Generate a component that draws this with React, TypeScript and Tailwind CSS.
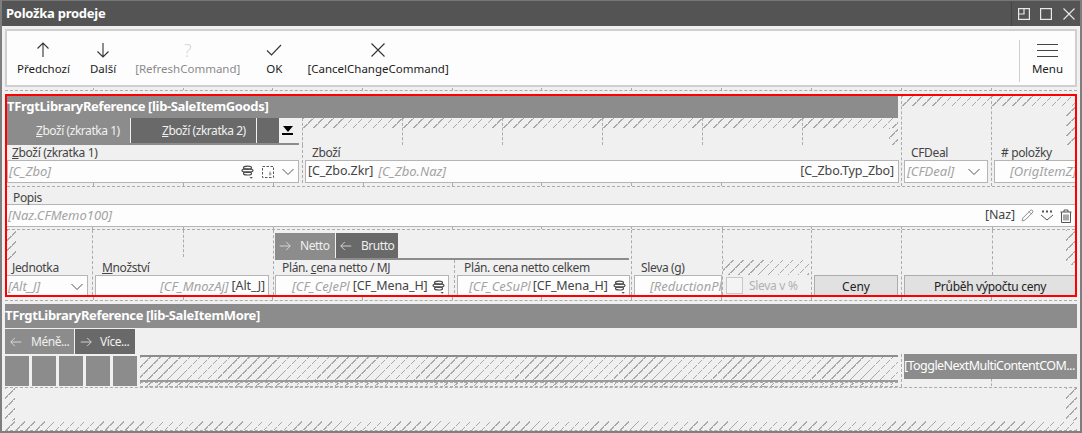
import React from 'react';
import { Pencil } from 'lucide-react';

const hatch =
  'bg-[repeating-linear-gradient(45deg,transparent_0,transparent_6px,#f0f0f0_6px,#f0f0f0_7px),repeating-linear-gradient(135deg,#a8a8a8_0,#a8a8a8_1px,transparent_1px,transparent_7px)]';
const dash = 'border-[#ababab] border-dashed';

// small stacked-disc glyph used by the lookup fields
function StackIcon() {
  return (
    <svg width="14" height="14" viewBox="0 0 14 14" fill="none" stroke="#4a4a4a" strokeWidth="1.2" className="shrink-0">
      <ellipse cx="6.5" cy="2.8" rx="4" ry="1.6" />
      <ellipse cx="6.5" cy="5.6" rx="5.5" ry="1.7" />
      <ellipse cx="6.5" cy="8.4" rx="4" ry="1.6" />
      <path d="M8.5 12h3.4l-1.7 1.8z" fill="#555" stroke="none" />
    </svg>
  );
}

function PickIcon() {
  return (
    <svg width="14" height="14" viewBox="0 0 14 14" fill="none" className="shrink-0">
      <rect x="1.5" y="1.5" width="11" height="11" stroke="#555" strokeDasharray="2.5 1.5" />
      <path d="M8 9h2.5M9 6.5v4" stroke="#888" />
    </svg>
  );
}

function Chevron() {
  return (
    <svg width="14" height="8" viewBox="0 0 14 8" fill="none" stroke="#555" strokeWidth="1" className="shrink-0">
      <path d="M1.5 1l5.5 5.5L12.5 1" />
    </svg>
  );
}

function Arrow({ dir, color = '#333', size = 16 }: { dir: 'up' | 'down' | 'left' | 'right'; color?: string; size?: number }) {
  const paths = {
    up: 'M8 15V1M2.5 6.5L8 1l5.5 5.5',
    down: 'M8 1v14M2.5 9.5L8 15l5.5-5.5',
    left: 'M15 8H1M6.5 2.5L1 8l5.5 5.5',
    right: 'M1 8h14M9.5 2.5L15 8l-5.5 5.5',
  };
  return (
    <svg width={size} height={size} viewBox="0 0 16 16" fill="none" stroke={color} strokeWidth="1.1" className="shrink-0">
      <path d={paths[dir]} />
    </svg>
  );
}

function ToolButton({ label, icon, className = '' }: { label: string; icon: React.ReactNode; className?: string }) {
  return (
    <div className={`flex flex-col items-center ${className}`}>
      <div className="flex h-[20px] items-center justify-center">{icon}</div>
      <div className="mt-[1px] whitespace-nowrap text-[11.5px] leading-[16px]">{label}</div>
    </div>
  );
}

// thin strip with a dashed bottom line and short ticks
function Ruler({ widths, className = '' }: { widths: number[]; className?: string }) {
  return (
    <div className={`flex shrink-0 border-b ${dash} ${className}`}>
      {widths.map((w, i) => (
        <div key={i} style={{ width: w }} className={`h-full shrink-0 ${i > 0 ? `border-l ${dash}` : ''}`} />
      ))}
    </div>
  );
}

function Input({ children, className = '' }: { children?: React.ReactNode; className?: string }) {
  return (
    <div className={`flex h-[23px] shrink-0 items-center overflow-hidden border border-[#b5b5b5] bg-[#fdfdfd] px-[1px] text-[12.5px] tracking-[-0.1px] text-[#444] ${className}`}>
      {children}
    </div>
  );
}

function Ph({ children }: { children: React.ReactNode }) {
  return <span className="text-[13px] tracking-normal whitespace-nowrap text-[#a3a3a3] italic">{children}</span>;
}

function Label({ children, className = '' }: { children: React.ReactNode; className?: string }) {
  return <div className={`h-[15px] text-[12px] leading-[15px] tracking-[-0.35px] whitespace-nowrap text-[#444] ${className}`}>{children}</div>;
}

function Tab({ children, dark, className = '' }: { children?: React.ReactNode; dark?: boolean; className?: string }) {
  return (
    <div className={`flex h-full shrink-0 items-center text-[12px] tracking-[-0.45px] whitespace-nowrap text-[#f0f0f0] ${dark ? 'bg-[#696969]' : 'bg-[#8c8c8c]'} ${className}`}>
      {children}
    </div>
  );
}

export default function App() {
  const grid = [88, 90, 89, 90, 90, 89, 90, 90, 90, 90, 90, 86];
  return (
    <div className="flex h-[433px] w-[1082px] flex-col overflow-hidden border-x-2 border-b-2 border-[#7e7e7e] bg-[#f0f0f0] font-['Noto_Sans',sans-serif]">
      {/* title bar */}
      <div className="flex h-[26px] shrink-0 items-center border-t border-[#777] bg-[#545454] pl-[4px] text-white">
        <div className="pt-px text-[13px] font-bold tracking-[-0.25px]">Položka prodeje</div>
        <div className="ml-auto flex h-[24px] items-center border-l border-[#454545] pr-[5px] pl-[6px]">
          <svg width="12" height="12" viewBox="0 0 12 12" fill="none" stroke="#e8e8e8" strokeWidth="1.2">
            <rect x="0.6" y="0.6" width="10.8" height="10.8" />
            <path d="M0.6 6h5.4V0.6" />
          </svg>
          <svg width="12" height="12" viewBox="0 0 12 12" fill="none" stroke="#e8e8e8" strokeWidth="1.2" className="ml-[10px]">
            <rect x="0.6" y="0.6" width="10.8" height="10.8" />
          </svg>
          <svg width="12" height="12" viewBox="0 0 12 12" fill="none" stroke="#e8e8e8" strokeWidth="1.1" className="ml-[11px]">
            <path d="M0.5 0.5l11 11M11.5 0.5l-11 11" />
          </svg>
        </div>
      </div>

      <div className="flex flex-1 flex-col px-[3px]">
        {/* toolbar */}
        <div className="mt-[3px] flex h-[58px] shrink-0 items-start border-2 border-[#cfcfcf] bg-[#fdfdfd] pt-[9px] text-[#222]">
          <ToolButton className="ml-[10px]" label="Předchozí" icon={<Arrow dir="up" />} />
          <ToolButton className="ml-[20px]" label="Další" icon={<Arrow dir="down" />} />
          <ToolButton
            className="ml-[19px] text-[#8a8a8a]"
            label="[RefreshCommand]"
            icon={<span className="text-[18px] leading-none font-light text-[#d8d8d8]">?</span>}
          />
          <ToolButton
            className="ml-[26px]"
            label="OK"
            icon={
              <svg width="16" height="12" viewBox="0 0 16 12" fill="none" stroke="#333" strokeWidth="1.1">
                <path d="M1 6.5l4.5 4.5L15 1" />
              </svg>
            }
          />
          <ToolButton
            className="ml-[25px]"
            label="[CancelChangeCommand]"
            icon={
              <svg width="14" height="14" viewBox="0 0 14 14" fill="none" stroke="#333" strokeWidth="1.1">
                <path d="M0.5 0.5l13 13M13.5 0.5l-13 13" />
              </svg>
            }
          />
          <div className="ml-auto flex h-[42px] w-[56px] flex-col items-center border-l border-[#cfcfcf]">
            <div className="flex h-[20px] flex-col justify-center gap-[5px]">
              <div className="h-px w-[21px] bg-[#444]" />
              <div className="h-px w-[21px] bg-[#444]" />
              <div className="h-px w-[21px] bg-[#444]" />
            </div>
            <div className="mt-[1px] text-[11.5px] leading-[16px]">Menu</div>
          </div>
        </div>

        <Ruler className="mt-[1px] h-[3px]" widths={grid} />

        {/* library reference frame */}
        <div className="mt-[3px] h-[203px] shrink-0 overflow-hidden border-2 border-[#ff0000]">
          <div className="flex h-[90px]">
            <div className="flex w-[891px] shrink-0 flex-col">
              <div className="flex h-[22px] shrink-0 items-center bg-[#8c8c8c] text-[13px] font-bold tracking-[-0.35px] text-white">
                TFrgtLibraryReference [lib-SaleItemGoods]
              </div>
              <div className="flex h-[27px] shrink-0">
                <div className="flex w-[295px] shrink-0 flex-col">
                  <div className="flex h-[25px] shrink-0">
                    <Tab className="w-[123px] pl-[29px]">
                      <span><span className="underline">Z</span>boží (zkratka 1)</span>
                    </Tab>
                    <Tab dark className="ml-px w-[125px] pl-[31px]">
                      <span><span className="underline">Z</span>boží (zkratka 2)</span>
                    </Tab>
                    <Tab dark className="ml-px w-[22px]" />
                    <div className="ml-[3px] flex w-[11px] flex-col items-center pt-[8px]">
                      <div className="h-0 w-0 border-x-[5.5px] border-t-[6px] border-x-transparent border-t-black" />
                      <div className="mt-[1px] h-[2px] w-[11px] bg-black" />
                    </div>
                  </div>
                  <div className="h-[2px] w-[292px] bg-[#8c8c8c]" />
                </div>
                {[100, 100, 100, 100, 100].map((w, i) => (
                  <div key={i} style={{ width: w }} className={`shrink-0 border-l ${dash}`}>
                    <div className={`h-[10px] ${hatch}`} />
                  </div>
                ))}
                <div className={`flex w-[96px] shrink-0 flex-col border-l ${dash}`}>
                  <div className={`h-[10px] ${hatch}`} />
                  <div className="flex flex-1 justify-end">
                    <div className={`w-[9px] ${hatch}`} />
                  </div>
                </div>
              </div>
              <div className="flex h-[38px] shrink-0">
                <div className="w-[295px] shrink-0 pr-[3px]">
                  <Label className="pl-[5px]"><span className="underline">Z</span>boží (zkratka 1)</Label>
                  <Input>
                    <Ph>[C_Zbo]</Ph>
                    <div className="ml-auto flex items-center gap-[6px] pr-[2px]">
                      <StackIcon />
                      <PickIcon />
                      <Chevron />
                    </div>
                  </Input>
                </div>
                <div className={`w-[596px] shrink-0 border-l ${dash} pl-[2px]`}>
                  <Label className="pl-[7px]">Zboží</Label>
                  <Input className="w-[594px] px-[2px]">
                    <span className="whitespace-nowrap">[C_Zbo.Zkr]</span>
                    <span className="ml-[5px]"><Ph>[C_Zbo.Naz]</Ph></span>
                    <span className="ml-auto pr-[2px] whitespace-nowrap">[C_Zbo.Typ_Zbo]</span>
                  </Input>
                </div>
              </div>
              <div className="flex h-[3px]">
                {[86, 90, 90, 90, 89, 89, 90, 90, 77].map((w, i) => (
                  <div key={i} style={{ width: w }} className={`shrink-0 ${i > 0 ? `border-l ${dash}` : ''}`} />
                ))}
              </div>
            </div>
            <div className={`ml-[3px] flex w-[90px] shrink-0 flex-col border-l ${dash} pl-[2px]`}>
              <div className={`-ml-[2px] h-[10px] ${hatch}`} />
              <div className="flex-1" />
              <Label className="pl-[7px]">CFDeal</Label>
              <Input className="w-[84px] px-[2px]">
                <Ph>[CFDeal]</Ph>
                <span className="ml-auto pr-[4px]"><Chevron /></span>
              </Input>
              <div className="h-[3px]" />
            </div>
            <div className={`flex w-[84px] shrink-0 flex-col border-l ${dash} pl-[2px]`}>
              <div className={`-ml-[2px] h-[10px] ${hatch}`} />
              <div className="flex flex-1 justify-end">
                <div className={`w-[9px] ${hatch}`} />
              </div>
              <Label className="pl-[7px]"># položky</Label>
              <Input className="w-[82px] border-r-0 pl-[15px]">
                <Ph>[OrigItemZ]</Ph>
              </Input>
              <div className="h-[3px]" />
            </div>
          </div>

          {/* description row */}
          <div className={`border-t ${dash}`}>
            <Label className="h-[17px] pt-[3px] pl-[6px]">Popis</Label>
            <Input className="border-x-0 pr-[3px]">
              <Ph>[Naz.CFMemo100]</Ph>
              <span className="ml-auto">[Naz]</span>
              <Pencil size={13} strokeWidth={1.2} className="ml-[6px] text-[#555]" />
              <svg width="14" height="12" viewBox="0 0 14 12" fill="none" stroke="#555" className="ml-[6px]">
                <path d="M1 5l6 5 6-5" />
                <path d="M2 1.5h2M6 1.5h2M10 1.5h2" strokeWidth="2" />
              </svg>
              <svg width="12" height="14" viewBox="0 0 12 14" fill="none" stroke="#555" className="ml-[6px]">
                <path d="M0.5 3h11M4 3V1h4v2M1.5 3v10.5h9V3" />
                <path d="M4 5.5v6M6 5.5v6M8 5.5v6" />
              </svg>
            </Input>
            <Ruler className="h-[3px]" widths={[85, 91, 90, 179, 89, 90, 91, 89, 90, 91, 83]} />
          </div>

          {/* bottom row */}
          <div className="flex h-[65px]">
            <div className="flex w-[85px] shrink-0 flex-col">
              <div className={`h-[30px] w-[9px] shrink-0 ${hatch}`} />
              <Label className="pl-[5px]"><span className="underline">J</span>ednotka</Label>
              <Input className="w-[81px] border-l-0">
                <Ph>[Alt_J]</Ph>
                <span className="ml-auto pr-[2px]"><Chevron /></span>
              </Input>
            </div>
            <div className={`flex w-[181px] shrink-0 flex-col border-l ${dash} pl-[2px]`}>
              <div className="flex h-[30px] shrink-0">
                <div className={`h-[27px] w-[89px] border-r ${dash}`} />
              </div>
              <Label className="pl-[7px]"><span className="underline">M</span>nožství</Label>
              <Input className="w-[174px] justify-end pr-[3px]">
                <Ph>[CF_MnozAj]</Ph>
                <span className="ml-[3px] whitespace-nowrap">[Alt_J]</span>
              </Input>
            </div>
            <div className={`flex w-[358px] shrink-0 flex-col border-l ${dash} pl-[1px]`}>
              <div className="flex h-[30px] w-[354px] shrink-0 flex-col pt-[3px]">
                <div className="flex h-[25px] shrink-0">
                  <Tab className="w-[60px] pl-[4px]">
                    <Arrow dir="right" color="#e6e6e6" size={12} />
                    <span className="ml-[9px]">Netto</span>
                  </Tab>
                  <Tab dark className="ml-px w-[62px] pl-[4px]">
                    <Arrow dir="left" color="#e6e6e6" size={12} />
                    <span className="ml-[9px]">Brutto</span>
                  </Tab>
                </div>
                <div className="h-[2px] shrink-0 bg-[#8c8c8c]" />
              </div>
              <div className="flex">
                <div className="w-[179px] shrink-0">
                  <Label className="pl-[7px]">Plán. <span className="underline">c</span>ena netto / MJ</Label>
                  <Input className="w-[174px] pr-[2px] pl-[16px]">
                    <Ph>[CF_CeJePl</Ph>
                    <span className="ml-[3px] whitespace-nowrap">[CF_Mena_H]</span>
                    <span className="ml-auto"><StackIcon /></span>
                  </Input>
                </div>
                <div className={`w-[176px] shrink-0 border-l ${dash} pl-[2px]`}>
                  <Label className="pl-[7px]">Plán. cena netto celkem</Label>
                  <Input className="w-[173px] pr-[2px] pl-[11px]">
                    <Ph>[CF_CeSuPl</Ph>
                    <span className="ml-[2px] whitespace-nowrap">[CF_Mena_H]</span>
                    <span className="ml-auto"><StackIcon /></span>
                  </Input>
                </div>
              </div>
            </div>
            <div className={`flex w-[91px] shrink-0 flex-col border-l ${dash} pl-[2px]`}>
              <div className="h-[30px] shrink-0" />
              <Label className="pl-[7px]">Sleva (<span className="underline">g</span>)</Label>
              <Input className="w-[88px] pl-[15px]">
                <Ph>[ReductionPl</Ph>
              </Input>
            </div>
            <div className={`flex w-[89px] shrink-0 flex-col border-l ${dash}`}>
              <div className={`mt-[30px] h-[15px] w-[86px] shrink-0 ${hatch}`} />
              <div className="mt-px flex h-[22px] items-center pl-[3px] text-[12px] tracking-[-0.3px] text-[#b0b0b0]">
                <div className="h-[17px] w-[17px] shrink-0 border border-[#c8c8c8] bg-[#f4f4f4]" />
                <span className="ml-[6px] whitespace-nowrap">Sleva v %</span>
              </div>
            </div>
            <div className={`flex w-[90px] shrink-0 flex-col border-l ${dash} pl-[2px]`}>
              <div className="h-[45px] shrink-0" />
              <div className="flex h-[23px] w-[84px] shrink-0 items-center justify-center border border-[#adadad] bg-[#e1e1e1] text-[12px] text-[#222]">
                Ceny
              </div>
            </div>
            <div className={`flex flex-1 flex-col border-l ${dash} pl-[2px]`}>
              <div className="flex h-[45px] shrink-0">
                <div className={`h-full w-[89px] border-r ${dash}`} />
                <div className="flex flex-1 justify-end">
                  <div className={`h-[35px] w-[9px] ${hatch}`} />
                </div>
              </div>
              <div className="flex h-[23px] shrink-0 items-center justify-center border border-[#adadad] border-r-0 bg-[#e1e1e1] text-[12px] tracking-[-0.3px] text-[#222]">
                Průběh výpočtu ceny
              </div>
            </div>
          </div>
        </div>

        <Ruler className="h-[4px]" widths={grid} />

        {/* second library reference */}
        <div className="mt-[3px] flex h-[24px] shrink-0 items-center bg-[#8c8c8c] text-[13px] font-bold tracking-[-0.35px] text-white">
          TFrgtLibraryReference [lib-SaleItemMore]
        </div>
        <div className="mt-px flex h-[25px] shrink-0">
          <Tab className="w-[69px] pl-[5px]">
            <Arrow dir="left" color="#e6e6e6" size={12} />
            <span className="ml-[9px]">Méně...</span>
          </Tab>
          <Tab dark className="ml-px w-[60px] pl-[5px]">
            <Arrow dir="right" color="#e6e6e6" size={12} />
            <span className="ml-[8px]">Více...</span>
          </Tab>
        </div>
        <div className="flex h-[33px] shrink-0">
          <div className="flex w-[135px] shrink-0 gap-[3px] pt-[2px]">
            {[0, 1, 2, 3, 4].map((i) => (
              <div key={i} className="h-[30px] w-[24px] shrink-0 bg-[#8c8c8c]" />
            ))}
          </div>
          <div className="flex w-[758px] shrink-0 flex-col pt-px">
            <div className="h-[2px] shrink-0 bg-[#8c8c8c]" />
            <div className={`h-[23px] shrink-0 ${hatch}`} />
            <div className="h-[2px] shrink-0 bg-[#9a9a9a]" />
            <div className={`flex-1 border-y ${dash} ${hatch}`} />
          </div>
          <div className={`ml-[3px] flex w-[176px] shrink-0 flex-col border-l ${dash} pl-[2px]`}>
            <div className="flex h-[25px] shrink-0 items-center bg-[#8c8c8c] text-[12.5px] tracking-[-0.55px] whitespace-nowrap text-white">
              [ToggleNextMultiContentCOM...
            </div>
            <div className={`ml-[87px] h-[7px] border-l ${dash}`} />
          </div>
        </div>

        {/* empty hatched remainder */}
        <div className={`flex h-[44px] shrink-0 flex-col border-t border-b ${dash}`}>
          <div className="flex flex-1 justify-between">
            <div className={`w-[10px] ${hatch}`} />
            <div className={`w-[11px] ${hatch}`} />
          </div>
          <div className={`h-[9px] shrink-0 ${hatch}`} />
        </div>
      </div>
    </div>
  );
}
